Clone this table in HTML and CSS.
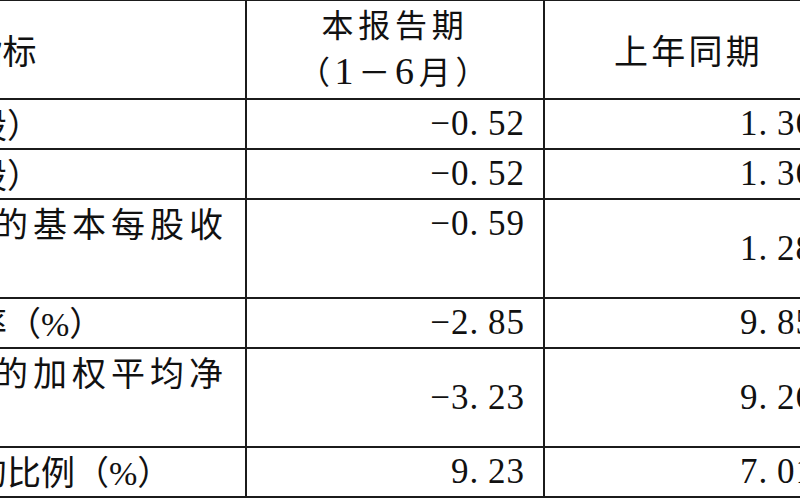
FILE: index.html
```html
<!DOCTYPE html>
<html lang="zh-CN">
<head>
<meta charset="utf-8">
<title>主要财务指标</title>
<link rel="stylesheet" href="styles.css">
</head>
<body>
<div class="viewport">
  <table class="report">
    <colgroup>
      <col class="c-label">
      <col class="c-cur">
      <col class="c-prev">
    </colgroup>
    <thead>
      <tr class="r-head">
        <th class="cell label head-label">主要财务指标</th>
        <th class="cell head-cur"><span class="line">本报告期</span><span class="line">（<span class="hd-num">1</span>－<span class="hd-num">6</span>月）</span></th>
        <th class="cell head-prev">上年同期</th>
      </tr>
    </thead>
    <tbody>
      <tr class="r-single">
        <td class="cell label single">基本每股收益（元／股）</td>
        <td class="cell num">−0<span class="pt">.</span>52</td>
        <td class="cell num">1<span class="pt">.</span>36</td>
      </tr>
      <tr class="r-single">
        <td class="cell label single">稀释每股收益（元／股）</td>
        <td class="cell num">−0<span class="pt">.</span>52</td>
        <td class="cell num">1<span class="pt">.</span>36</td>
      </tr>
      <tr class="r-tall">
        <td class="cell label wrap">扣除非经常性损益后的基本每股收益（元／股）</td>
        <td class="cell num top">−0<span class="pt">.</span>59</td>
        <td class="cell num">1<span class="pt">.</span>28</td>
      </tr>
      <tr class="r-single">
        <td class="cell label single">加权平均净资产收益率（<span class="pct">%</span>）</td>
        <td class="cell num">−2<span class="pt">.</span>85</td>
        <td class="cell num">9<span class="pt">.</span>85</td>
      </tr>
      <tr class="r-tall">
        <td class="cell label wrap">扣除非经常性损益后的加权平均净资产收益率（<span class="pct">%</span>）</td>
        <td class="cell num">−3<span class="pt">.</span>23</td>
        <td class="cell num">9<span class="pt">.</span>26</td>
      </tr>
      <tr class="r-single">
        <td class="cell label single">研发投入占营业收入的比例（<span class="pct">%</span>）</td>
        <td class="cell num">9<span class="pt">.</span>23</td>
        <td class="cell num">7<span class="pt">.</span>01</td>
      </tr>
    </tbody>
  </table>
</div>
</body>
</html>
```
FILE: styles.css
```css
html, body {
  margin: 0;
  padding: 0;
  background: #ffffff;
}

body {
  font-family: "Liberation Serif", "Noto Sans CJK SC", serif;
  color: #111111;
}

.viewport {
  width: 800px;
  height: 500px;
  overflow: hidden;
}

.report {
  border-collapse: collapse;
  table-layout: fixed;
  width: 1232px;
  margin: -1px 0 0 -400px;
}

.c-label { width: 645px; }
.c-cur { width: 298px; }
.c-prev { width: 289px; }

.cell {
  border: 2px solid #1b1b1b;
  padding: 0;
  font-weight: normal;
}

.r-head { height: 99px; }
.r-single { height: 50px; }
.r-tall { height: 99px; }

.cell.label {
  font-family: "Noto Sans CJK SC", sans-serif;
  font-size: 34px;
  line-height: 44px;
  padding: 0 9px 0 41px;
  text-align: left;
}

.cell.label.single {
  text-indent: 24px;
  white-space: nowrap;
}

.cell.label.wrap {
  vertical-align: top;
  letter-spacing: 5px;
  padding-top: 1px;
}

.cell.head-label {
  text-align: center;
  padding-right: 19px;
}

.pct {
  font-family: "Liberation Serif", serif;
  letter-spacing: 0;
}

.cell.head-cur {
  font-size: 32px;
  line-height: 45px;
  letter-spacing: 4.7px;
  text-align: center;
}

.head-cur .line {
  display: block;
}

.hd-num {
  font-size: 38px;
  line-height: 45px;
}

.cell.head-prev {
  font-size: 34px;
  letter-spacing: 3.3px;
  text-align: center;
}

.cell.num {
  font-size: 35px;
  line-height: 40px;
  letter-spacing: 1px;
  text-align: right;
  padding-right: 18px;
}

.cell.num.top {
  vertical-align: top;
  padding-top: 4px;
}

.pt {
  padding-right: 0.25em;
}
```
